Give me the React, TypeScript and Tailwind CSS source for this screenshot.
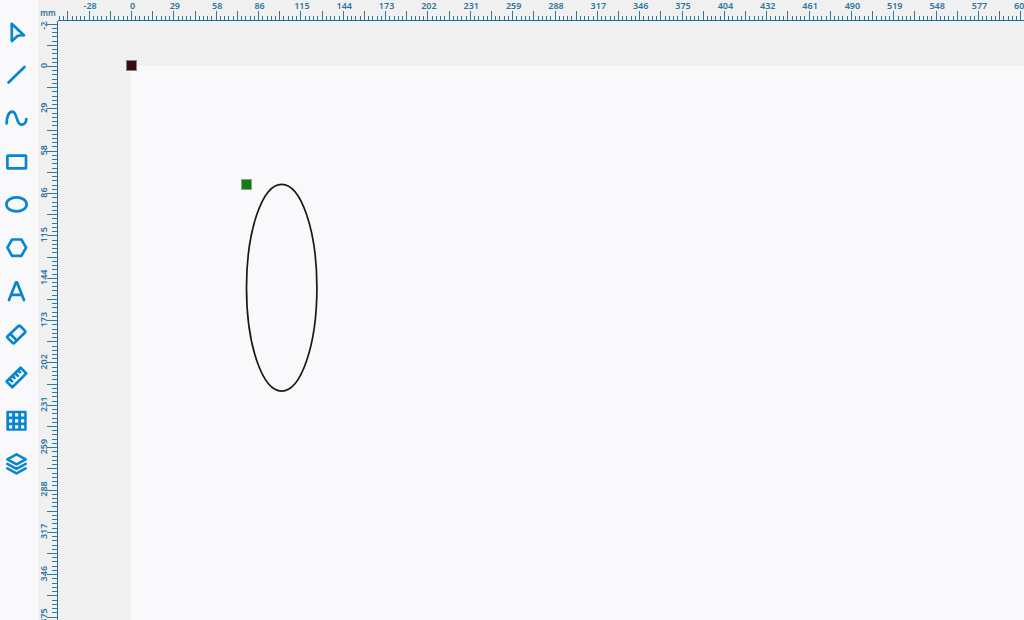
import { useEffect, useState } from "react";
import type { ReactNode } from "react";

const STEP = 42.35;
const UNIT = 28.83;
const MINOR_PER_STEP = 10;

const H_ORIGIN = 73.5;
const V_ORIGIN = 45.5;

const TOOLBAR_WIDTH = 38;
const RULER_WIDTH = 20;
const RULER_HEIGHT = 21;

function makeTicks(origin: number, length: number) {
  const gap = STEP / MINOR_PER_STEP;
  const first = Math.ceil(-origin / gap);
  const last = Math.floor((length - origin) / gap);
  const ticks: { n: number; pos: number; long: boolean }[] = [];
  for (let n = first; n <= last; n++) {
    ticks.push({ n, pos: origin + n * gap, long: n % 5 === 0 });
  }
  return ticks;
}

function makeLabels(origin: number, length: number) {
  const labels: { text: string; pos: number }[] = [];
  for (let k = -1; origin + k * STEP < length; k++) {
    const value = k < 0 ? Math.ceil(k * UNIT) : Math.round(k * UNIT);
    labels.push({ text: String(value), pos: origin + k * STEP });
  }
  return labels;
}

function useWindowSize() {
  const [size, setSize] = useState({ width: window.innerWidth, height: window.innerHeight });
  useEffect(() => {
    const update = () => setSize({ width: window.innerWidth, height: window.innerHeight });
    window.addEventListener("resize", update);
    return () => window.removeEventListener("resize", update);
  }, []);
  return size;
}

function HorizontalRuler({ length }: { length: number }) {
  return (
    <svg className="block h-full w-full overflow-hidden" aria-label="Horizontal ruler">
      {makeTicks(H_ORIGIN, length).map((t) => (
        <rect key={t.n} x={Math.round(t.pos - 0.5)} y={t.long ? 11 : 16} width="1" height={t.long ? 9 : 4} className="fill-[#2f7aa5]" />
      ))}
      <rect x="0" y="20" width="100%" height="1" className="fill-[#1f719f]" />
      {makeLabels(H_ORIGIN + 1, length).map((l) => (
        <text key={l.text} x={l.pos} y="9" textAnchor="middle" className="fill-[#2c759f] text-[9px] font-semibold">
          {l.text}
        </text>
      ))}
    </svg>
  );
}

function VerticalRuler({ length }: { length: number }) {
  return (
    <svg className="block h-full w-full overflow-hidden" aria-label="Vertical ruler">
      {makeTicks(V_ORIGIN, length).map((t) => (
        <rect key={t.n} x={t.long ? 9 : 14} y={Math.round(t.pos - 0.5)} width={t.long ? 10 : 5} height="1" className="fill-[#2f7aa5]" />
      ))}
      <rect x="19" y="0" width="1" height="100%" className="fill-[#1f719f]" />
      {makeLabels(V_ORIGIN - 1, length).map((l) => (
        <text
          key={l.text}
          transform={`translate(9 ${l.pos}) rotate(-90)`}
          textAnchor="middle"
          className="fill-[#2c759f] text-[9px] font-semibold"
        >
          {l.text}
        </text>
      ))}
    </svg>
  );
}

const tools: { name: string; icon: ReactNode }[] = [
  { name: "Select", icon: <path d="M8.7 2.8L20.9 14.3Q15.8 14 14.2 15.2L8.9 20.1Z" /> },
  { name: "Line", icon: <path d="M5.5 18.5L21.5 3" /> },
  { name: "Curve", icon: <path d="M3.6 16.4C3.6 9.5 6 4.6 9.2 4.6C14.5 4.6 13 17.6 18.3 17.6C21.3 17.6 23.3 15.2 23.3 12" /> },
  { name: "Rectangle", icon: <rect x="4.4" y="5.7" width="18.6" height="12.6" rx="0.4" /> },
  { name: "Ellipse", icon: <ellipse cx="13.5" cy="11.4" rx="10.1" ry="7" /> },
  { name: "Polygon", icon: <path d="M4.4 11.7L9 3.5H18.4L23.1 11.7L18.4 19.9H9Z" /> },
  { name: "Text", icon: <path d="M6 21.1L12.9 3.4H14.1L21 21.1M8.6 15.9H18.4" /> },
  {
    name: "Eraser",
    icon: (
      <path d="M15.4 4Q16.3 3.2 17.2 4L22 8.9Q22.8 9.7 22 10.5L11.4 20.9Q10.5 21.7 9.6 20.9L4.6 15.9Q3.7 15 4.6 14.2ZM7.3 12L13.9 18.6" />
    ),
  },
  {
    name: "Measure",
    icon: <path d="M17.6 2.7L23.3 8.4L9.3 22.2L3.6 16.5ZM6.3 13.7L9.1 16.4M9.2 10.8L11.4 13M12 8L14.8 10.7M14.9 5.2L17.1 7.4" />,
  },
  {
    name: "Grid",
    icon: (
      <path
        stroke="none"
        fill="currentColor"
        fillRule="evenodd"
        d="M4.6 2.7H22.4Q23.7 2.7 23.7 4V21.4Q23.7 22.7 22.4 22.7H4.6Q3.3 22.7 3.3 21.4V4Q3.3 2.7 4.6 2.7ZM6 5.2V8.4H9.2V5.2ZM12 5.2V8.4H15.2V5.2ZM18 5.2V8.4H21.2V5.2ZM6 11.2V14.4H9.2V11.2ZM12 11.2V14.4H15.2V11.2ZM18 11.2V14.4H21.2V11.2ZM6 17.2V20.4H9.2V17.2ZM12 17.2V20.4H15.2V17.2ZM18 17.2V20.4H21.2V17.2Z"
      />
    ),
  },
  {
    name: "Layers",
    icon: <path strokeWidth="2.5" d="M13.5 3.3L22.7 8.3L13.5 13.3L4.3 8.3ZM4.3 12.9L13.5 17.9L22.7 12.9M4.3 17.3L13.5 22.4L22.7 17.3" />,
  },
];

function Toolbar() {
  return (
    <nav className="flex w-[38px] shrink-0 flex-col bg-[#f9f9fc] pt-3" aria-label="Drawing tools">
      {tools.map((tool) => (
        <button
          key={tool.name}
          type="button"
          aria-label={tool.name}
          className="flex h-[43px] shrink-0 items-center justify-center pr-1.5 text-[#0786cf] hover:text-[#045f94]"
        >
          <svg
            viewBox="0 0 26 25"
            className="h-[25px] w-[26px]"
            fill="none"
            stroke="currentColor"
            strokeWidth="2.7"
            strokeLinecap="round"
            strokeLinejoin="round"
          >
            {tool.icon}
          </svg>
        </button>
      ))}
    </nav>
  );
}

function Stage() {
  return (
    <svg className="block h-full w-full overflow-hidden" aria-label="Drawing canvas">
      <rect x="73" y="45" width="100%" height="100%" className="fill-[#f9f9fb]" />
      <ellipse cx="223.7" cy="266.7" rx="35.2" ry="103.4" fill="none" className="stroke-[#1c1718]" strokeWidth="1.7" />
      <rect x="68.5" y="39.5" width="10" height="10" className="fill-[#350c10] stroke-[#8b8084]" />
      <rect x="183.5" y="158.5" width="10" height="10" className="fill-[#147a16] stroke-[#7fa982]" />
    </svg>
  );
}

export default function App() {
  const { width, height } = useWindowSize();
  return (
    <div className="flex h-screen overflow-hidden bg-[#f0f0f0] font-['Noto_Sans','Open_Sans',sans-serif]">
      <Toolbar />
      <main className="grid min-w-0 flex-1 grid-cols-[20px_minmax(0,1fr)] grid-rows-[21px_minmax(0,1fr)]">
        <div className="flex items-end justify-center pb-0.5 text-[8px] leading-3 font-semibold text-[#2c759f]">mm</div>
        <HorizontalRuler length={width - TOOLBAR_WIDTH - RULER_WIDTH} />
        <VerticalRuler length={height - RULER_HEIGHT} />
        <Stage />
      </main>
    </div>
  );
}
